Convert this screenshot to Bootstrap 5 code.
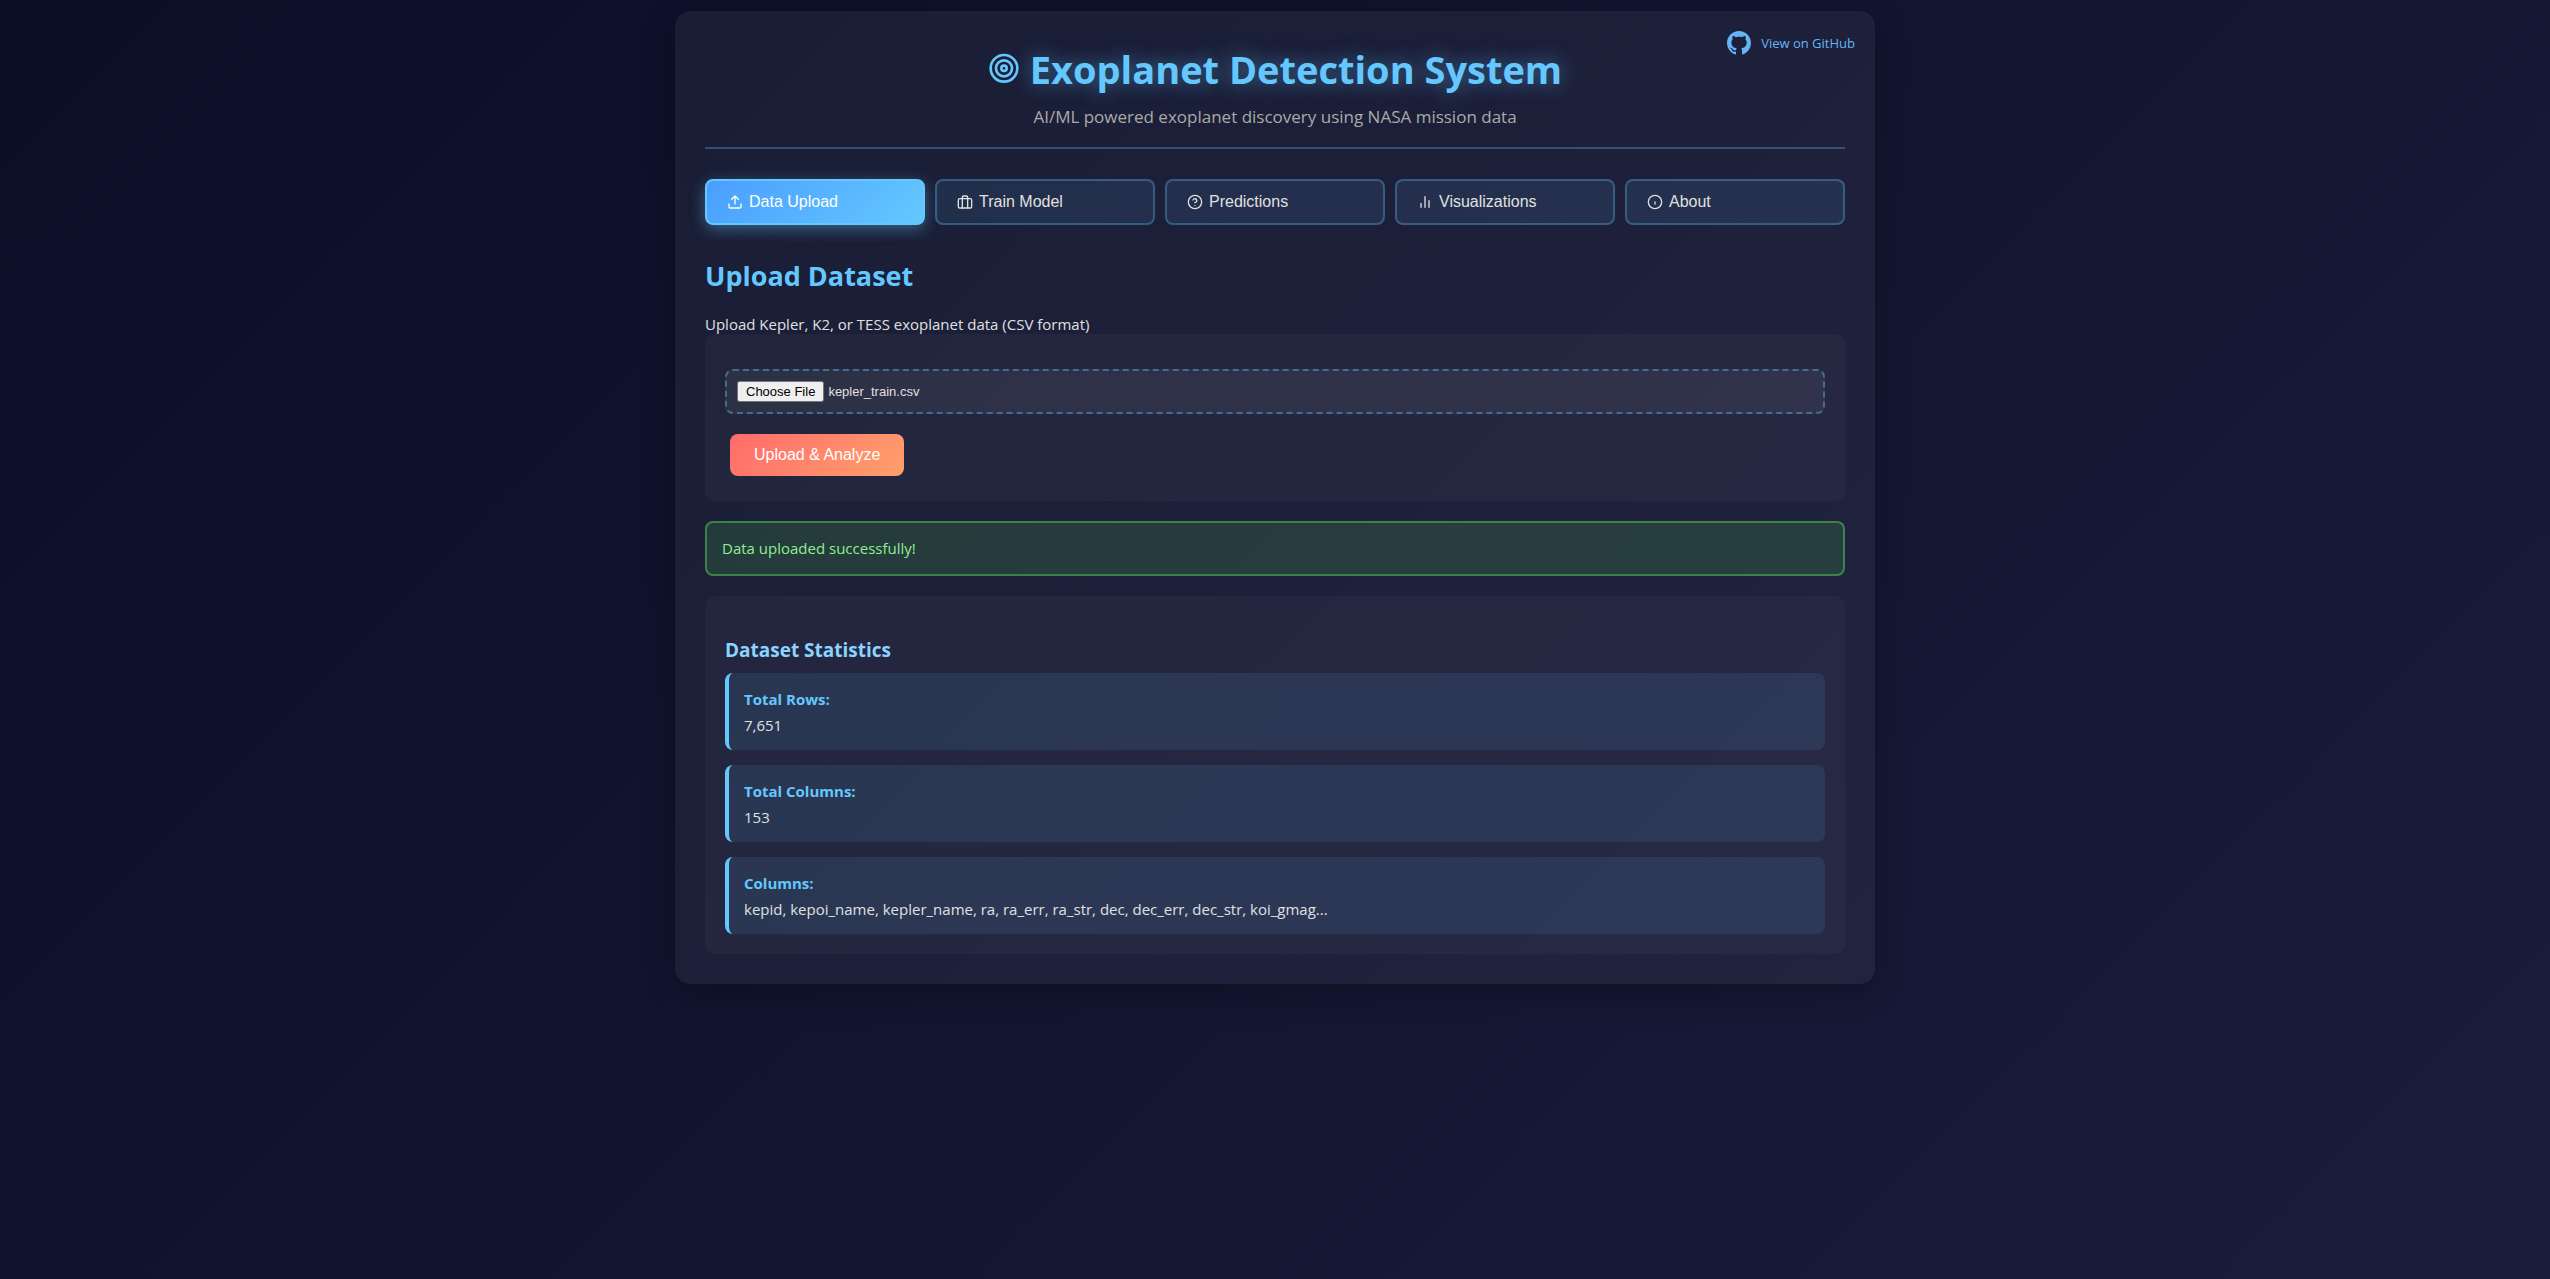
<!DOCTYPE html>
<html lang="en">
<head>
<meta charset="utf-8">
<meta name="viewport" content="width=device-width, initial-scale=1">
<title>Exoplanet Detection System</title>
<link href="https://cdn.jsdelivr.net/npm/bootstrap@5.3.0/dist/css/bootstrap.min.css" rel="stylesheet">
<style>
  body {
    min-height: 100vh;
    padding-top: 11px;
    color: #e0e0e0;
    font-family: "Open Sans", "Noto Sans", sans-serif;
    font-size: 15px;
    line-height: 26px;
    background: linear-gradient(135deg, #0a0e27 0%, #1a1d3a 100%);
  }
  .shell {
    max-width: 1200px;
    padding: 30px;
    border-radius: 15px;
    background: rgba(255, 255, 255, .05);
    box-shadow: 0 8px 32px rgba(0, 0, 0, .3);
  }
  .repo-link { top: 20px; right: 20px; gap: 10px; color: #64b5f6; font-size: 13px; line-height: 24px; }
  .line-icon { fill: none; stroke: currentColor; stroke-width: 2; stroke-linecap: round; stroke-linejoin: round; flex: none; }
  .masthead { border-bottom: 2px solid rgba(100, 200, 255, .3); padding-bottom: 14px; margin-bottom: 30px; }
  .masthead h1 {
    color: #64c8ff;
    font-size: 38px;
    font-weight: 700;
    line-height: 56px;
    gap: 10px;
    text-shadow: 0 0 20px rgba(100, 200, 255, .5);
  }
  .tagline { color: #aaa; font-size: 17px; line-height: 32px; }
  .tab-bar { gap: 10px; margin-bottom: 30px; }
  .tab-btn {
    flex: 1 1 0;
    gap: 6px;
    padding: 9px 20px;
    border: 2px solid rgba(100, 200, 255, .3);
    border-radius: 8px;
    background: rgba(100, 200, 255, .1);
    color: #e0e0e0;
    font: 16px/24px "Liberation Sans", Arial, sans-serif;
  }
  .tab-btn.active {
    color: #fff;
    border-color: #64c8ff;
    background: linear-gradient(135deg, #4a9eff, #64c8ff);
    box-shadow: 0 4px 15px rgba(100, 200, 255, .4);
  }
  h2 { color: #64c8ff; font-size: 27px; font-weight: 700; line-height: 42px; margin-bottom: 17px; }
  h3 { color: #8dd3ff; font-size: 19px; font-weight: 700; line-height: 30px; margin-bottom: 8px; }
  .hint { line-height: 20px; }
  .panel { border-radius: 10px; background: rgba(255, 255, 255, .03); }
  .upload-panel { padding: 35px 20px 25px; }
  .file-box {
    padding: 10px;
    border: 2px dashed rgba(100, 200, 255, .4);
    border-radius: 8px;
    background: rgba(255, 255, 255, .05);
    color: #e0e0e0;
    font: 13px/15px "Liberation Sans", Arial, sans-serif;
  }
  .file-box::file-selector-button { padding: 1px 7px; }
  .go-btn {
    margin: 20px 5px 0;
    padding: 9px 24px;
    border: 0;
    border-radius: 8px;
    color: #fff;
    background: linear-gradient(135deg, #ff6b6b, #ffa06b);
    font: 16px/24px "Liberation Sans", Arial, sans-serif;
  }
  .notice {
    padding: 13px 15px;
    margin: 20px 0;
    border: 2px solid rgba(76, 175, 80, .6);
    border-radius: 8px;
    background: rgba(76, 175, 80, .2);
    color: #90ee90;
    line-height: 25px;
  }
  .stats-panel { padding: 39px 20px 20px; }
  .stat-list { gap: 15px; }
  .stat {
    padding: 13px 15px 12px;
    border-left: 4px solid #64c8ff;
    border-radius: 8px;
    background: rgba(100, 200, 255, .1);
  }
  .stat dt { color: #64c8ff; }
</style>
</head>
<body>
<main class="shell position-relative mx-auto">
  <a class="repo-link position-absolute d-flex align-items-center text-decoration-none" href="#github">
    <svg width="24" height="24" viewBox="0 0 16 16" fill="currentColor" aria-hidden="true"><path d="M8 0C3.58 0 0 3.58 0 8c0 3.54 2.29 6.53 5.47 7.59.4.07.55-.17.55-.38 0-.19-.01-.82-.01-1.49-2.01.37-2.53-.49-2.69-.94-.09-.23-.48-.94-.82-1.13-.28-.15-.68-.52-.01-.53.63-.01 1.08.58 1.23.82.72 1.21 1.87.87 2.33.66.07-.52.28-.87.51-1.07-1.78-.2-3.64-.89-3.64-3.95 0-.87.31-1.59.82-2.15-.08-.2-.36-1.02.08-2.12 0 0 .67-.21 2.2.82.64-.18 1.32-.27 2-.27s1.36.09 2 .27c1.53-1.04 2.2-.82 2.2-.82.44 1.1.16 1.92.08 2.12.51.56.82 1.27.82 2.15 0 3.07-1.87 3.75-3.65 3.95.29.25.54.73.54 1.48 0 1.07-.01 1.93-.01 2.2 0 .21.15.46.55.38A8.01 8.01 0 0 0 16 8c0-4.42-3.58-8-8-8z"/></svg>
    <span>View on GitHub</span>
  </a>

  <header class="masthead text-center">
    <h1 class="d-flex justify-content-center align-items-center mb-1">
      <svg class="line-icon" width="32" height="32" viewBox="0 0 24 24" aria-hidden="true"><circle cx="12" cy="11.5" r="10"/><circle cx="12" cy="11.5" r="6"/><circle cx="12" cy="11.5" r="2"/></svg>
      <span>Exoplanet Detection System</span>
    </h1>
    <p class="tagline mb-0">AI/ML powered exoplanet discovery using NASA mission data</p>
  </header>

  <nav class="tab-bar d-flex" aria-label="Sections">
    <button type="button" class="tab-btn active d-flex align-items-center">
      <svg class="line-icon" width="16" height="16" viewBox="0 0 24 24" aria-hidden="true"><path d="M21 15v4a2 2 0 0 1-2 2H5a2 2 0 0 1-2-2v-4M17 8l-5-5-5 5M12 3v12"/></svg>
      <span>Data Upload</span>
    </button>
    <button type="button" class="tab-btn d-flex align-items-center">
      <svg class="line-icon" width="16" height="16" viewBox="0 0 24 24" aria-hidden="true"><rect x="2" y="7" width="20" height="14" rx="2"/><path d="M16 21V5a2 2 0 0 0-2-2h-4a2 2 0 0 0-2 2v16"/></svg>
      <span>Train Model</span>
    </button>
    <button type="button" class="tab-btn d-flex align-items-center">
      <svg class="line-icon" width="16" height="16" viewBox="0 0 24 24" aria-hidden="true"><circle cx="12" cy="12" r="10"/><path d="M9 9a3 3 0 0 1 5.8 1c0 2-3 3-3 3M12 17h.01"/></svg>
      <span>Predictions</span>
    </button>
    <button type="button" class="tab-btn d-flex align-items-center">
      <svg class="line-icon" width="16" height="16" viewBox="0 0 24 24" aria-hidden="true"><path d="M6 20v-6M12 20V4M18 20V10"/></svg>
      <span>Visualizations</span>
    </button>
    <button type="button" class="tab-btn d-flex align-items-center">
      <svg class="line-icon" width="16" height="16" viewBox="0 0 24 24" aria-hidden="true"><circle cx="12" cy="12" r="10"/><path d="M12 12v3"/></svg>
      <span>About</span>
    </button>
  </nav>

  <section>
    <h2>Upload Dataset</h2>
    <label class="hint d-block" for="datasetFile">Upload Kepler, K2, or TESS exoplanet data (CSV format)</label>
    <form class="panel upload-panel">
      <input class="file-box d-block w-100" type="file" id="datasetFile" accept=".csv">
      <button type="button" class="go-btn">Upload &amp; Analyze</button>
    </form>

    <div class="notice" role="status">Data uploaded successfully!</div>

    <div class="panel stats-panel">
      <h3>Dataset Statistics</h3>
      <div class="stat-list d-flex flex-column">
        <dl class="stat mb-0"><dt>Total Rows:</dt><dd class="mb-0">7,651</dd></dl>
        <dl class="stat mb-0"><dt>Total Columns:</dt><dd class="mb-0">153</dd></dl>
        <dl class="stat mb-0"><dt>Columns:</dt><dd class="mb-0">kepid, kepoi_name, kepler_name, ra, ra_err, ra_str, dec, dec_err, dec_str, koi_gmag...</dd></dl>
      </div>
    </div>
  </section>
</main>
<script src="https://cdn.jsdelivr.net/npm/bootstrap@5.3.0/dist/js/bootstrap.bundle.min.js"></script>
<script>
  const picked = new DataTransfer();
  picked.items.add(new File(["kepid,kepoi_name\n"], "kepler_train.csv", { type: "text/csv" }));
  document.getElementById("datasetFile").files = picked.files;
</script>
</body>
</html>
